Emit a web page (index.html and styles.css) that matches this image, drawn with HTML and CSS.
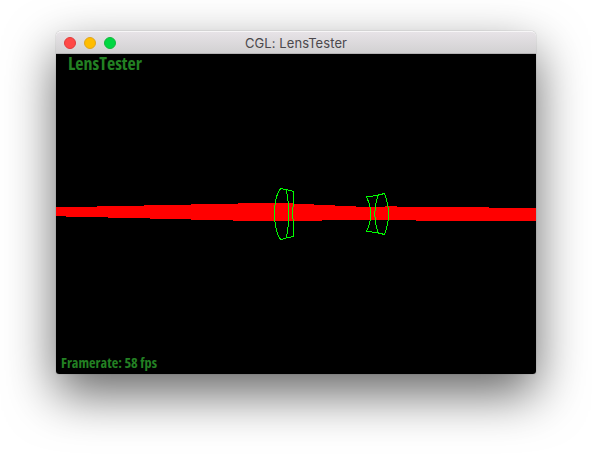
FILE: index.html
```
<!DOCTYPE html>
<html lang="en">
<head>
<meta charset="utf-8">
<title>CGL: LensTester</title>
<link rel="stylesheet" href="styles.css">
</head>
<body>
<main class="window">
  <header class="titlebar">
    <div class="controls">
      <span class="dot close"></span>
      <span class="dot minimize"></span>
      <span class="dot zoom"></span>
    </div>
    <h1 class="title">CGL: LensTester</h1>
  </header>
  <svg class="scene" viewBox="56 54 480 320" width="480" height="320">
    <path class="beam" d="M56 207H97V206H144V205H191V204H238V203H293V204H314V205H335V206H356V207H385V206H397V207H489V208H536V221H416V220H322V221H233V220H191V219H150V218H108V217H66V216H56Z"/>
    <g class="lens">
      <path d="M281 188.500C276.500 192.500 274.500 204 274.500 213.500S276.500 236 281 239.500"/>
      <path d="M281 188.500L293.500 191.300V204.500Q291.500 214 293.500 221.500V236.700L287.500 237.500L281 239.500"/>
      <path d="M286.500 190.500Q291 214 286.500 237.500"/>
      <path d="M366.500 197Q375 214 366.500 231.500L376.500 232.500L384.500 234.500Q392.500 214 384.500 193.500L376.500 195.500L366.500 197"/>
      <path d="M378 195.500Q371.500 214 378 232.500"/>
    </g>
    <text class="label" x="68" y="70" font-size="18" textLength="74" lengthAdjust="spacingAndGlyphs">LensTester</text>
    <text class="label" x="61" y="368" font-size="14" textLength="96" lengthAdjust="spacingAndGlyphs">Framerate: 58 fps</text>
  </svg>
</main>
</body>
</html>
```
FILE: styles.css
```
body {
  margin: 0;
  width: 592px;
  height: 454px;
  overflow: hidden;
  background: #fff;
}

.window {
  width: 480px;
  margin: 31px 0 0 56px;
  border-radius: 5px 5px 3px 3px;
  box-shadow: 0 0 1px rgba(0, 0, 0, .5), 0 20px 50px rgba(0, 0, 0, .6);
}

.titlebar {
  box-sizing: border-box;
  height: 23px;
  display: grid;
  grid-template-columns: 70px 1fr 70px;
  align-items: center;
  border-top: 1px solid #f7f6f7;
  border-bottom: 1px solid #b5b3b5;
  border-radius: 5px 5px 0 0;
  background: linear-gradient(#e7e3e7, #d2d1d2);
}

.controls {
  display: flex;
  gap: 8px;
  padding-left: 8px;
}

.dot {
  box-sizing: border-box;
  width: 12px;
  height: 12px;
  border-radius: 50%;
  border: 1px solid;
}

.close { background: #ff4846; border-color: #e13b3c; }
.minimize { background: #ffbd00; border-color: #e0a51d; }
.zoom { background: #00d742; border-color: #14b83c; }

.title {
  margin: 0;
  padding-top: 1px;
  text-align: center;
  font: 400 13px/20px Inter, "Liberation Sans", sans-serif;
  letter-spacing: .08px;
  color: #4b484c;
}

.scene {
  display: block;
  overflow: visible;
  background: #000;
  border-radius: 0 0 3px 3px;
}

.beam {
  fill: #f00;
  shape-rendering: crispEdges;
}

.lens {
  fill: none;
  stroke: #0f0;
  stroke-width: 1;
  shape-rendering: crispEdges;
}

.label {
  fill: #238023;
  font-family: "Open Sans", "Noto Sans", sans-serif;
  font-weight: 700;
  font-stretch: 75%;
}
```
